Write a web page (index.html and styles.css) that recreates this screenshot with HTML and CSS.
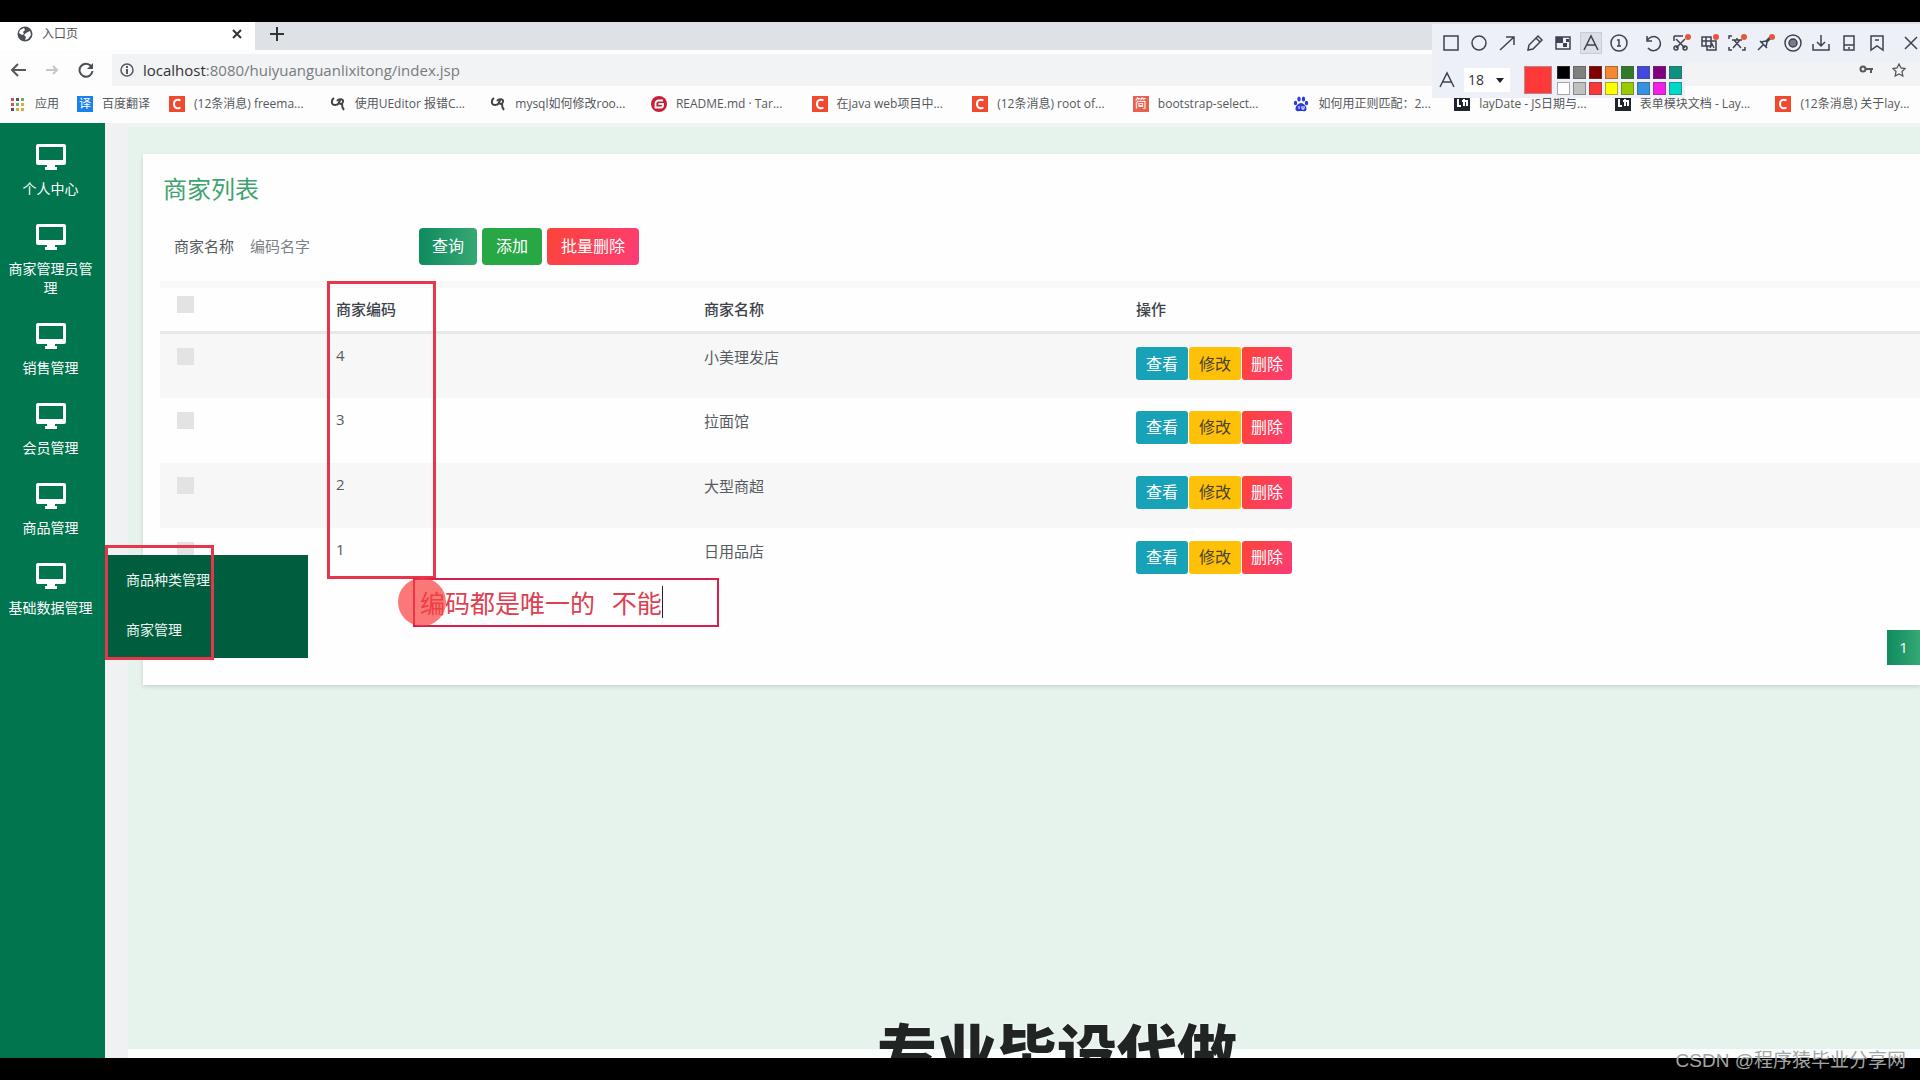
FILE: index.html
```html
<!DOCTYPE html>
<html lang="zh-CN">
<head>
<meta charset="utf-8">
<title>入口页</title>
<link rel="stylesheet" href="styles.css">
</head>
<body>
<svg class="defs" aria-hidden="true">
  <symbol id="monitor" viewBox="0 0 30 26"><path fill="currentColor" fill-rule="evenodd" d="M2 0h26a2 2 0 0 1 2 2v17a2 2 0 0 1-2 2h-9v2h2v3H9v-3h2v-2H2a2 2 0 0 1-2-2V2a2 2 0 0 1 2-2zm1 3v13h24V3z"/></symbol>
  <symbol id="csdn" viewBox="0 0 16 16"><path fill="#f1492f" d="M0 0h16v16H0z"/><path d="M11.500 4.500C9 3 5 3.600 5 8s4 5 6.500 3.500" fill="none" stroke="#fff" stroke-width="2"/></symbol>
  <symbol id="ue" viewBox="0 0 16 16"><path d="M4 2C1 4 1 9 5 9s5-3 5-6M7 5c2-3 7-2 6 1s-5 2-4 0M12 8c0 3 0 4 2 6" fill="none" stroke="#444" stroke-width="2"/></symbol>
  <symbol id="layui" viewBox="0 0 16 16"><path fill="#20242e" d="M0 1h16v14H0z"/><path d="M4 3v7h3M10 3v7M8 5h5v5" fill="none" stroke="#fff" stroke-width="2"/></symbol>
</svg>
<div class="letterbox"></div>
<header class="browser">
  <div class="tabs">
    <div class="tab">
      <svg class="i16" viewBox="0 0 16 16"><circle cx="8" cy="8" r="7.500" fill="#4b4f54"/><path fill="#fff" d="M3 4l4-2 1 2-2 2 1 2-2 1-3-2zM9 7l4-2 1 4-3 4-3 1 1-3-2-2z"/></svg>
      <span class="tab-title">入口页</span>
      <button class="plain" aria-label="关闭标签"><svg class="i10" viewBox="0 0 10 10"><path d="M1 1l8 8M9 1L1 9" stroke="#333" stroke-width="2"/></svg></button>
    </div>
    <button class="plain new-tab" aria-label="新标签"><svg class="i14" viewBox="0 0 14 14"><path d="M7 0v14M0 7h14" stroke="#333" stroke-width="2"/></svg></button>
  </div>
  <div class="toolbar">
    <button class="plain" aria-label="后退"><svg class="i16" viewBox="0 0 16 16"><path d="M16 8H2M8 2L2 8l6 6" fill="none" stroke="#55585c" stroke-width="2"/></svg></button>
    <button class="plain" aria-label="前进"><svg class="i16" viewBox="0 0 16 16"><path d="M2 8h11M9 4l4 4-4 4" fill="none" stroke="#c4c6c9" stroke-width="2"/></svg></button>
    <button class="plain" aria-label="刷新"><svg class="i16" viewBox="0 0 16 16"><path d="M13 4a6.500 6.500 0 1 0 1.500 5" fill="none" stroke="#4b4f54" stroke-width="2"/><path fill="#4b4f54" d="M15 1v6H9z"/></svg></button>
    <div class="omnibox">
      <svg class="i14" viewBox="0 0 14 14"><circle cx="7" cy="7" r="6" fill="none" stroke="#55585c" stroke-width="1.500"/><path d="M7 6v5M7 3v2" stroke="#55585c" stroke-width="2"/></svg>
      <span class="url"><b>localhost</b>:8080/huiyuanguanlixitong/index.jsp</span>
      <svg class="i14 key" viewBox="0 0 14 14"><circle cx="4" cy="6" r="2.500" fill="none" stroke="#55585c" stroke-width="2"/><path d="M6 6h8M12 6v4" stroke="#55585c" stroke-width="2"/></svg>
      <svg class="i14" viewBox="0 0 14 14"><path d="M7 1l2 4 4 .5-3 3 .8 4.500L7 11l-3.800 2L4 8.500l-3-3L5 5z" fill="none" stroke="#55585c" stroke-width="1.300"/></svg>
    </div>
  </div>
  <nav class="bookmarks" aria-label="书签">
    <a class="apps" href="#"><svg class="i16" viewBox="0 0 16 16"><path d="M1 2h3v3H1zM1 7h3v3H1z" fill="#c55"/><path d="M6 2h3v3H6zM1 12h3v3H1z" fill="#555"/><path d="M11 2h3v3h-3zM6 7h3v3H6z" fill="#6a8"/><path d="M11 7h3v3h-3zM6 12h3v3H6zM11 12h3v3h-3z" fill="#e5a53a"/></svg>应用</a>
    <a class="fanyi" href="#"><span class="fav blue">译</span>百度翻译</a>
    <a href="#"><svg class="i16"><use href="#csdn"/></svg>(12条消息) freema...</a>
    <a href="#"><svg class="i16"><use href="#ue"/></svg>使用UEditor 报错C...</a>
    <a href="#"><svg class="i16"><use href="#ue"/></svg>mysql如何修改roo...</a>
    <a href="#"><svg class="i16" viewBox="0 0 16 16"><circle cx="8" cy="8" r="8" fill="#c71d35"/><path d="M12 4.500H7.500a3 3 0 0 0-3 3v4H10a2 2 0 0 0 2-2V8H7.500" fill="none" stroke="#fff" stroke-width="1.800"/></svg>README.md · Tar...</a>
    <a href="#"><svg class="i16"><use href="#csdn"/></svg>在java web项目中...</a>
    <a href="#"><svg class="i16"><use href="#csdn"/></svg>(12条消息) root of...</a>
    <a href="#"><span class="fav coral">简</span>bootstrap-select...</a>
    <a href="#"><svg class="i16" viewBox="0 0 16 16"><g fill="#2b3be0"><ellipse cx="2.500" cy="7" rx="1.700" ry="2.300"/><ellipse cx="6" cy="3" rx="1.700" ry="2.500"/><ellipse cx="10.500" cy="3" rx="1.700" ry="2.500"/><ellipse cx="13.500" cy="7" rx="1.700" ry="2.300"/><path d="M8 7c3 0 6 4 5.500 6.500S10 15 8 15s-5 1-5.500-1.500S5 7 8 7z"/></g><path d="M6 10v3M9 10v3h2v-3" fill="none" stroke="#fff"/></svg>如何用正则匹配：2...</a>
    <a href="#"><svg class="i16"><use href="#layui"/></svg>layDate - JS日期与...</a>
    <a href="#"><svg class="i16"><use href="#layui"/></svg>表单模块文档 - Lay...</a>
    <a href="#"><svg class="i16"><use href="#csdn"/></svg>(12条消息) 关于lay...</a>
  </nav>
</header>

<div class="app">
  <nav class="sidebar">
    <a href="#"><svg><use href="#monitor"/></svg><span>个人中心</span></a>
    <a href="#"><svg><use href="#monitor"/></svg><span>商家管理员管理</span></a>
    <a href="#"><svg><use href="#monitor"/></svg><span>销售管理</span></a>
    <a href="#"><svg><use href="#monitor"/></svg><span>会员管理</span></a>
    <a href="#"><svg><use href="#monitor"/></svg><span>商品管理</span></a>
    <a href="#"><svg><use href="#monitor"/></svg><span>基础数据管理</span></a>
  </nav>
  <div class="gutter"></div>
  <main>
    <section class="card">
      <h1>商家列表</h1>
      <form class="search">
        <label for="name">商家名称</label>
        <input id="name" type="text" placeholder="编码名字">
        <button type="button" class="btn query">查询</button>
        <button type="button" class="btn add">添加</button>
        <button type="button" class="btn remove">批量删除</button>
      </form>
      <table>
        <colgroup><col class="c-check"><col class="c-code"><col class="c-name"><col></colgroup>
        <thead><tr><th class="pick"><input type="checkbox" aria-label="全选"></th><th>商家编码</th><th>商家名称</th><th>操作</th></tr></thead>
        <tbody>
          <tr><td><input type="checkbox" aria-label="选择 4"></td><td class="num">4</td><td>小美理发店</td><td><div class="ops"><button class="btn view">查看</button><button class="btn edit">修改</button><button class="btn remove">删除</button></div></td></tr>
          <tr><td><input type="checkbox" aria-label="选择 3"></td><td class="num">3</td><td>拉面馆</td><td><div class="ops"><button class="btn view">查看</button><button class="btn edit">修改</button><button class="btn remove">删除</button></div></td></tr>
          <tr><td><input type="checkbox" aria-label="选择 2"></td><td class="num">2</td><td>大型商超</td><td><div class="ops"><button class="btn view">查看</button><button class="btn edit">修改</button><button class="btn remove">删除</button></div></td></tr>
          <tr><td><input type="checkbox" aria-label="选择 1"></td><td class="num">1</td><td>日用品店</td><td><div class="ops"><button class="btn view">查看</button><button class="btn edit">修改</button><button class="btn remove">删除</button></div></td></tr>
        </tbody>
      </table>
      <div class="pager"><button>1</button></div>
    </section>
  </main>
  <div class="submenu"><a href="#">商品种类管理</a><a href="#">商家管理</a></div>
  <div class="caption">专业毕设代做</div>
</div>
<div class="letterbox"></div>

<div class="mark mark-code"></div>
<div class="mark mark-menu"></div>
<div class="note"><input type="text" aria-label="标注文字" value="编码都是唯一的   不能"><span class="caret"></span></div>
<div class="pointer"></div>

<div class="snip">
  <div class="snip-tools">
    <button aria-label="矩形"><svg viewBox="0 0 20 20"><path d="M3 3h14v14H3z"/></svg></button>
    <button aria-label="椭圆"><svg viewBox="0 0 20 20"><circle cx="10" cy="10" r="7"/></svg></button>
    <button aria-label="箭头"><svg viewBox="0 0 20 20"><path d="M3 17L17 4M9 4h8v8"/></svg></button>
    <button aria-label="画笔"><svg viewBox="0 0 20 20"><path d="M3 17l1-5 9-9 4 4-9 9zM11 5l4 4"/></svg></button>
    <button aria-label="马赛克"><svg viewBox="0 0 20 20"><path d="M3 4h14v12H3z"/><path class="solid" d="M3 4h7v6H3zM10 10h4v4h-4zM13 6h3v3h-3z"/></svg></button>
    <button class="on" aria-label="文字"><svg viewBox="0 0 20 20"><path d="M3 17l7-14 7 14M6 12h8"/></svg></button>
    <button aria-label="序号"><svg viewBox="0 0 20 20"><circle cx="10" cy="10" r="8"/><path d="M8 7h2v6M8 13h4"/></svg></button>
    <button class="apart" aria-label="撤销"><svg viewBox="0 0 20 20"><path d="M4 3v5h5M4 8a7 7 0 1 1 1 7"/></svg></button>
    <button aria-label="剪切"><svg viewBox="0 0 20 20"><path d="M3 3v5M3 3h9M5 6l9 9M14 6l-9 9"/><circle cx="5" cy="15" r="2"/><circle cx="14" cy="15" r="2"/><circle class="dot" cx="17" cy="4" r="3"/></svg></button>
    <button aria-label="翻译"><svg viewBox="0 0 20 20"><path d="M3 4h9v9H3zM3 8h9M7 4v9M12 8h5v9H8v-4M11 15l2-4 2 4"/><circle class="dot" cx="17" cy="4" r="3"/></svg></button>
    <button aria-label="识别文字"><svg viewBox="0 0 20 20"><path d="M2 6V3h3M2 14v3h3M18 14v3h-3M5 7h10M10 5v2M7 7l7 8M13 7l-7 8"/><circle class="dot" cx="17" cy="4" r="3"/></svg></button>
    <button aria-label="钉住"><svg viewBox="0 0 20 20"><path d="M3 17l5-5M5 8l7 7M6 9l5-1 4-4M11 14l1-5 4-4"/><circle class="dot" cx="17" cy="4" r="3"/></svg></button>
    <button aria-label="录制"><svg viewBox="0 0 20 20"><circle cx="10" cy="10" r="8"/><circle class="rec" cx="10" cy="10" r="4"/></svg></button>
    <button aria-label="下载"><svg viewBox="0 0 20 20"><path d="M10 2v10M6 9l4 4 4-4M2 11v6h16v-6"/></svg></button>
    <button aria-label="手机"><svg viewBox="0 0 20 20"><path d="M5 3h10v14H5zM5 12h10M9 15h2"/></svg></button>
    <button aria-label="收藏"><svg viewBox="0 0 20 20"><path d="M4 3h12v14l-6-4-6 4zM8 7h4"/></svg></button>
    <button class="apart" aria-label="关闭"><svg viewBox="0 0 20 20"><path d="M4 4l12 12M16 4L4 16"/></svg></button>
  </div>
  <div class="snip-style">
    <svg viewBox="0 0 20 20"><path d="M3 17l7-14 7 14M6 12h8"/></svg>
    <label class="size"><select aria-label="字号"><option>18</option></select></label>
    <button class="current" aria-label="当前颜色"></button>
    <div class="palette">
      <button class="k1" aria-label="黑"></button><button class="k2" aria-label="灰"></button><button class="k3" aria-label="深红"></button><button class="k4" aria-label="橙"></button><button class="k5" aria-label="绿"></button><button class="k6" aria-label="蓝"></button><button class="k7" aria-label="紫"></button><button class="k8" aria-label="青"></button>
      <button class="k9" aria-label="白"></button><button class="k10" aria-label="浅灰"></button><button class="k11" aria-label="红"></button><button class="k12" aria-label="黄"></button><button class="k13" aria-label="黄绿"></button><button class="k14" aria-label="天蓝"></button><button class="k15" aria-label="品红"></button><button class="k16" aria-label="青绿"></button>
    </div>
  </div>
</div>
<div class="credit">CSDN @程序猿毕业分享网</div>
</body>
</html>
```
FILE: styles.css
```css
* { box-sizing: border-box; }
body {
  margin: 0;
  height: 100vh;
  display: flex;
  flex-direction: column;
  position: relative;
  overflow: hidden;
  background: #000;
  color: #555b60;
  font: 15px/20px "Open Sans", "Noto Sans CJK SC", sans-serif;
}
a { color: inherit; text-decoration: none; }
button, input, select { font: inherit; color: inherit; margin: 0; }
button { border: 0; padding: 0; }
.defs { position: absolute; width: 0; height: 0; }
.letterbox { flex: 0 0 22px; background: #000; }
.i10 { width: 10px; height: 10px; }
.i14 { width: 14px; height: 14px; }
.i16 { width: 16px; height: 16px; flex: none; }
.plain { background: none; display: flex; }

/* Browser chrome */
.browser { flex: none; background: #fdfdfd; }
.tabs { display: flex; align-items: center; height: 28px; background: #dee1e6; }
.tab { display: flex; align-items: center; gap: 9px; width: 255px; height: 28px; padding: 0 13px 4px 17px; background: #fff; }
.tab-title { flex: 1; font-size: 12px; color: #555; }
.new-tab { margin-left: 15px; padding-bottom: 4px; }
.toolbar { display: flex; align-items: center; gap: 18px; height: 39px; padding-left: 10px; }
.omnibox { flex: 1; display: flex; align-items: center; gap: 9px; height: 32px; padding: 0 14px 0 8px; background: #f1f3f4; }
.url { font-size: 15px; color: #777b80; }
.url b { font-weight: 400; color: #333; }
.key { margin-left: auto; margin-right: 10px; }
.bookmarks { display: flex; align-items: center; height: 34px; margin-right: -16px; padding: 0 0 4px 10px; font-size: 12px; color: #55585c; white-space: nowrap; }
.bookmarks a { display: flex; align-items: center; gap: 9px; flex: 1 1 0; min-width: 0; overflow: hidden; }
.bookmarks .apps { flex: 0 0 67px; }
.bookmarks .fanyi { flex: 0 0 92px; }
.fav { flex: none; width: 16px; height: 16px; color: #fff; font-size: 12px; line-height: 16px; text-align: center; }
.blue { background: #1b80ea; }
.coral { background: #e8604f; }

/* Application */
.app { flex: 1; min-height: 0; display: flex; position: relative; overflow: hidden; background: #e6f2ec; }
.sidebar { flex: 0 0 105px; padding-top: 9px; background: #00754e; color: #fff; font-size: 14px; line-height: 19px; text-align: center; }
.sidebar a { display: flex; flex-direction: column; align-items: center; gap: 9px; padding: 12px 11px 14px 7px; }
.sidebar svg { width: 30px; height: 26px; }
.gutter { flex: 0 0 23px; background: #eff1f2; }
main { flex: 1; min-width: 0; padding: 31px 0 0 15px; border-top: 4px solid #eff3f2; border-bottom: 9px solid #fafffd; }
.card { height: 531px; margin-top: -4px; padding: 21px 0 0 17px; background: #fefefe; box-shadow: 0 2px 4px #ccd6d1; }
h1 { margin: 0; padding-left: 3px; font-size: 24px; font-weight: 400; line-height: 28px; color: #40a36f; }
.search { display: flex; align-items: center; gap: 5px; height: 38px; margin: 24px 0 16px; padding-left: 14px; }
.search input { width: 168px; height: 36px; margin: 0 7px 0 0; padding: 0 11px; border: 0; background: none; }
.search input::placeholder { color: #7c8186; opacity: 1; }
.btn { height: 37px; padding: 0 13px; border-radius: 4px; color: #fff; font-size: 16px; }
.query { background: linear-gradient(90deg, #0f8b5f, #36a873); }
.add { background: #28a745; padding: 0 14px; }
.remove { background: linear-gradient(120deg, #fc4438, #fd3c76); padding: 0 14px; }
.view { background: #17a2b8; }
.edit { background: #ffc107; color: #4a4330; }
.ops { display: flex; gap: 1px; }
.ops .btn { height: 33px; padding: 0 10px; border-radius: 3px; font-size: 16px; }
.ops .remove { padding: 0 9px; }

table { width: 100%; table-layout: fixed; border-collapse: collapse; border-top: 7px solid #f8f8f8; }
.c-check { width: 165px; }
.c-code { width: 368px; }
.c-name { width: 432px; }
th, td { text-align: left; vertical-align: top; }
th { height: 48px; padding: 11px; border-bottom: 3px solid #e7e8e9; font-weight: 500; color: #3c4248; }
td { height: 65px; padding: 13px 11px; }
.num { padding-top: 11px; }
tbody tr:nth-child(odd) { background: #f7f7f7; }
table input { display: block; appearance: none; width: 17px; height: 17px; margin: 1px 6px; background: #e3e3e3; }
.pick { padding-top: 7px; }
.pager { display: flex; justify-content: flex-end; margin-top: 37px; }
.pager button { width: 33px; height: 35px; background: linear-gradient(90deg, #0f8b5f, #36a873); color: #fff; }

.submenu { position: absolute; left: 107px; top: 432px; width: 201px; padding: 1px 0 2px; background: #005e3f; color: #eef7f2; font-size: 14px; }
.submenu a { display: block; padding: 14px 19px 16px; line-height: 20px; }
.caption { position: absolute; left: 877px; bottom: -28px; font-size: 60px; line-height: 68px; font-weight: 900; color: #202524; text-shadow: 0 0 3px #fff; white-space: nowrap; }

/* Annotations drawn over the page */
.mark { position: absolute; border: 3px solid #e5364b; }
.mark-code { left: 327px; top: 281px; width: 109px; height: 298px; }
.mark-menu { left: 105px; top: 545px; width: 109px; height: 115px; }
.note { position: absolute; left: 413px; top: 578px; width: 306px; height: 49px; display: flex; align-items: center; padding: 0 0 2px 5px; border: 2px solid #d81e4a; }
.note input { width: 242px; height: 36px; padding: 0; border: 0; background: none; color: #dd4050; font: 25px/36px "Noto Sans CJK SC", sans-serif; }
.caret { width: 1px; height: 32px; background: #222; }
.pointer { position: absolute; left: 398px; top: 578px; width: 48px; height: 48px; border-radius: 50%; background: rgba(250, 62, 62, .7); }

/* Capture tool palette */
.snip { position: absolute; top: 24px; right: 0; width: 488px; }
.snip svg { display: block; width: 20px; height: 20px; fill: none; stroke: #3d4350; stroke-width: 1.500; }
.snip .solid { fill: #3d4350; stroke: none; }
.snip .dot { fill: #e4573d; stroke: none; }
.snip .rec { fill: #777d88; }
.snip-tools { display: flex; align-items: center; gap: 8px; height: 38px; padding-left: 9px; background: #edf0f6; }
.snip-tools button { flex: none; background: none; }
.snip-tools .on { background: #dcdfe6; outline: 1px solid #c9ccd4; }
.snip-tools .apart { margin-left: 6px; }
.snip-style { display: flex; align-items: center; width: 253px; height: 36px; padding-left: 5px; background: #edf0f6; }
.size { position: relative; margin: 0 14px 0 7px; }
.size select { display: block; width: 46px; height: 24px; padding: 0 4px; appearance: none; border: 0; background: #fff; color: #333; font-size: 14px; }
.size::after { content: ""; position: absolute; right: 6px; top: 10px; border: 4px solid transparent; border-top: 5px solid #222; }
.current { width: 28px; height: 28px; margin-right: 5px; background: #ff3838; border: 1px solid #b88; }
.palette { display: grid; grid-template-columns: repeat(8, 13px); gap: 3px; }
.palette button { height: 13px; border: 1px solid rgba(80, 80, 80, .5); }
.k1 { background: #000; } .k2 { background: #808080; } .k3 { background: #800000; } .k4 { background: #f7882e; }
.k5 { background: #307a2c; } .k6 { background: #4147e0; } .k7 { background: #800080; } .k8 { background: #109080; }
.k9 { background: #fff; } .k10 { background: #c0c0c0; } .k11 { background: #fb3838; } .k12 { background: #ff0; }
.k13 { background: #99cc00; } .k14 { background: #3890e0; } .k15 { background: #f51de8; } .k16 { background: #00d8c8; }
.credit { position: absolute; right: 14px; bottom: 7px; font: 19px/24px "Liberation Sans", "Noto Sans CJK SC", sans-serif; color: #a3a5a5; }
```
